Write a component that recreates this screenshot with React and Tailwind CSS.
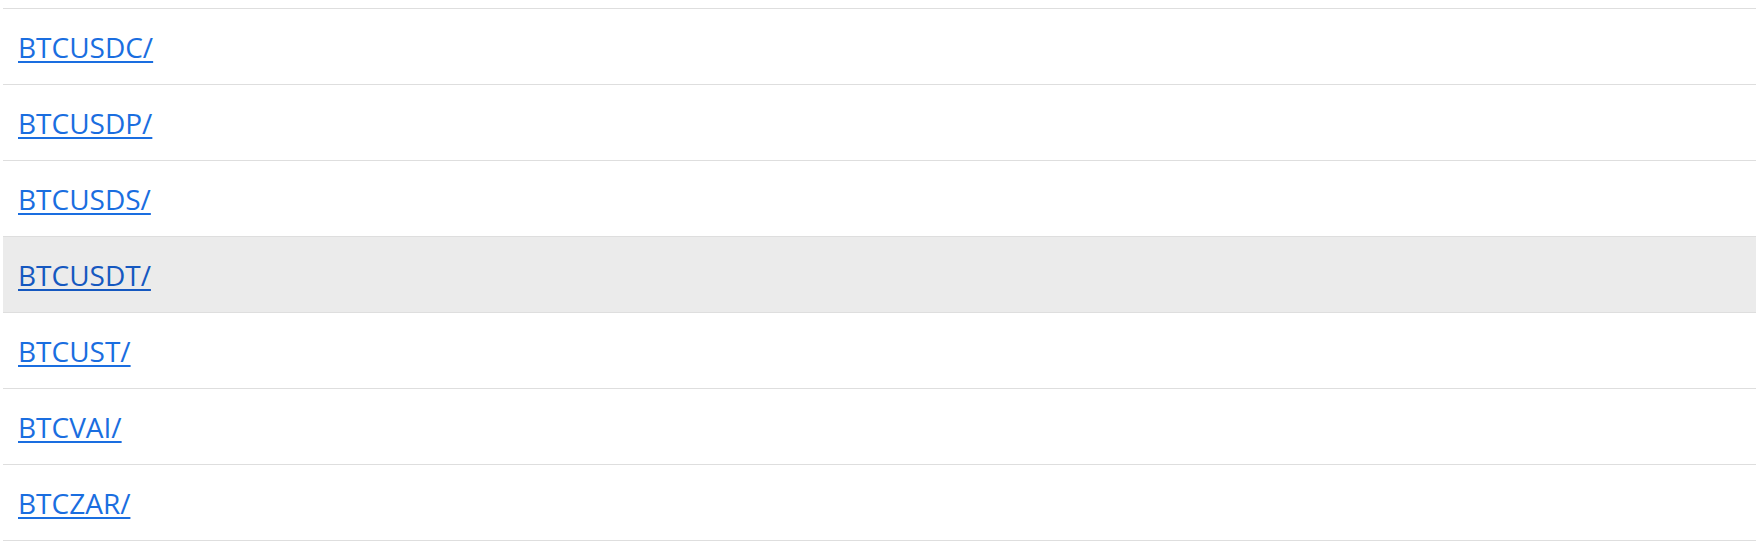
const pairs = ['BTCUSDC/', 'BTCUSDP/', 'BTCUSDS/', 'BTCUSDT/', 'BTCUST/', 'BTCVAI/', 'BTCZAR/'];

export default function App() {
  return (
    <div className="bg-white w-[1762px] h-[547px] pt-[8px] pl-[3px] font-['Open_Sans',sans-serif]">
      <ul className="w-[1753px] border-t border-[#dedede]">
        {pairs.map((name) => (
          <li
            key={name}
            className={`h-[76px] border-b border-[#dedede] flex items-center pl-[15px] ${name === 'BTCUSDT/' ? 'bg-[#ebebeb]' : ''}`}
          >
            <a
              href="#"
              className={`text-[28px] leading-[38px] underline underline-offset-[3px] decoration-[2px] ${name === 'BTCUSDT/' ? 'text-[#1558c0]' : 'text-[#1a6ee0]'}`}
            >
              {name}
            </a>
          </li>
        ))}
      </ul>
    </div>
  );
}
